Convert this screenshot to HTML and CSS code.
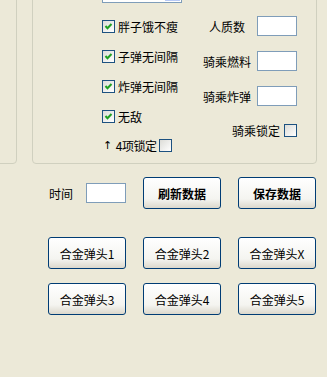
FILE: index.html
```html
<!DOCTYPE html>
<html lang="zh-CN">
<head>
    <meta charset="UTF-8">
    <title>修改器</title>
    <link rel="stylesheet" href="styles.css">
</head>
<body>
    <div class="top">
        <div class="side-group"></div>
        <div class="main-group">
            <div class="col-left">
                <div class="combo"><span class="combo-btn"></span></div>
                <label class="check-row"><span class="box"><svg viewBox="0 0 11 11"><path d="M2.5 5 L4.5 7.3 L8.5 3" /></svg></span>胖子饿不瘦</label>
                <label class="check-row"><span class="box"><svg viewBox="0 0 11 11"><path d="M2.5 5 L4.5 7.3 L8.5 3" /></svg></span>子弹无间隔</label>
                <label class="check-row"><span class="box"><svg viewBox="0 0 11 11"><path d="M2.5 5 L4.5 7.3 L8.5 3" /></svg></span>炸弹无间隔</label>
                <label class="check-row"><span class="box"><svg viewBox="0 0 11 11"><path d="M2.5 5 L4.5 7.3 L8.5 3" /></svg></span>无敌</label>
                <label class="lock-row"><span class="arrow">↑</span>4项锁定<span class="box"></span></label>
            </div>
            <div class="col-right">
                <div class="field-row"><span class="field-label">人质数</span><input class="text-box" type="text"></div>
                <div class="field-row"><span class="field-label">骑乘燃料</span><input class="text-box" type="text"></div>
                <div class="field-row"><span class="field-label">骑乘炸弹</span><input class="text-box" type="text"></div>
                <label class="ride-lock">骑乘锁定<span class="box"></span></label>
            </div>
        </div>
    </div>

    <div class="actions">
        <div class="time-cell"><span>时间</span><input class="text-box" type="text"></div>
        <button class="btn btn-bold">刷新数据</button>
        <button class="btn btn-bold">保存数据</button>
    </div>

    <div class="warheads">
        <button class="btn">合金弹头1</button>
        <button class="btn">合金弹头2</button>
        <button class="btn">合金弹头X</button>
        <button class="btn">合金弹头3</button>
        <button class="btn">合金弹头4</button>
        <button class="btn">合金弹头5</button>
    </div>
</body>
</html>
```

FILE: styles.css
```css
/* General */
body {
    margin: 0;
    background-color: #ece9d8;
    font-family: "Noto Sans CJK SC", "Liberation Sans", sans-serif;
    font-size: 12px;
    color: #000;
    overflow: hidden;
}

/* Group boxes */
.top {
    display: flex;
    margin-top: -40px;
}

.side-group {
    margin-left: -20px;
    width: 37px;
    box-sizing: border-box;
    border: 1px solid #d0d0bf;
    border-radius: 4px;
}

.main-group {
    display: flex;
    margin-left: 15px;
    width: 285px;
    box-sizing: border-box;
    border: 1px solid #d0d0bf;
    border-radius: 4px;
    padding: 20px 19px 11px 69px;
}

.col-left {
    flex: 1;
}

.combo {
    position: relative;
    width: 80px;
    height: 22px;
    box-sizing: border-box;
    border: 1px solid #7f9db9;
    background-color: #fff;
    margin-bottom: 17px;
}

.combo-btn {
    position: absolute;
    right: 1px;
    top: 1px;
    bottom: 1px;
    width: 15px;
    background-color: #c3d3fd;
    border: 1px solid #b7c9f6;
    box-sizing: border-box;
}

.check-row {
    display: flex;
    align-items: center;
    gap: 3px;
    height: 13px;
    line-height: 13px;
    margin-bottom: 17px;
    white-space: nowrap;
}

.check-row:nth-of-type(4) {
    margin-bottom: 16px;
}

.box {
    display: inline-block;
    flex-shrink: 0;
    width: 13px;
    height: 13px;
    box-sizing: border-box;
    border: 1px solid #1c5180;
    background: linear-gradient(135deg, #dcdcd7, #fff);
}

.box svg {
    display: block;
    width: 11px;
    height: 11px;
    fill: none;
    stroke: #21a121;
    stroke-width: 2;
}

.lock-row {
    display: flex;
    align-items: center;
    height: 13px;
    line-height: 13px;
    padding-left: 1px;
    white-space: nowrap;
    letter-spacing: -0.5px;
}

.arrow {
    margin-right: 4px;
    font-family: "DejaVu Sans", sans-serif;
    font-size: 11px;
}

.lock-row .box {
    margin-left: 3px;
}

/* Right column */
.col-right {
    width: 94px;
    flex-shrink: 0;
    margin-top: 35px;
}

.field-row {
    display: flex;
    align-items: center;
    height: 20px;
    margin-bottom: 15px;
}

.field-row:nth-child(3) {
    margin-bottom: 18px;
}

.field-label {
    flex-shrink: 0;
    width: 48px;
    text-align: center;
    margin-right: 6px;
    white-space: nowrap;
}

.text-box {
    flex-shrink: 0;
    width: 40px;
    height: 20px;
    box-sizing: border-box;
    border: 1px solid #7f9db9;
    background-color: #fff;
    padding: 0;
    margin: 0;
}

.ride-lock {
    display: flex;
    align-items: center;
    justify-content: flex-end;
    gap: 4px;
    height: 13px;
    white-space: nowrap;
}

/* Buttons */
.actions,
.warheads {
    display: grid;
    grid-template-columns: repeat(3, 78px);
    column-gap: 17px;
    margin-left: 48px;
}

.actions {
    margin-top: 13px;
}

.warheads {
    margin-top: 28px;
    row-gap: 14px;
}

.time-cell {
    display: flex;
    align-items: center;
    justify-content: space-between;
    padding-left: 1px;
}

.btn {
    height: 32px;
    padding: 0;
    border: 1px solid #003c74;
    border-radius: 3px;
    background: linear-gradient(#ffffff, #f4f4f0 70%, #dcd8cc);
    font-family: "Noto Sans CJK SC", "Liberation Sans", sans-serif;
    font-size: 12px;
    color: #000;
}

.btn-bold {
    font-weight: bold;
}
```
